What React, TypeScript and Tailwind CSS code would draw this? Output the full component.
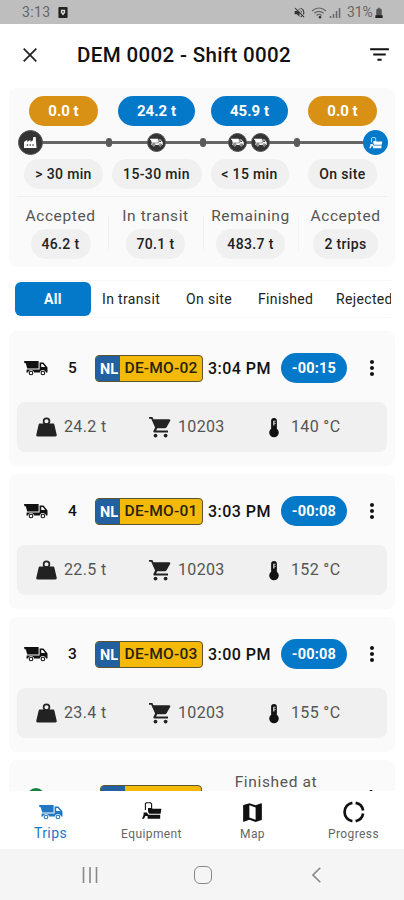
import type { ReactNode } from "react";
import { MdFilterList, MdMap, MdMoreVert, MdVolumeOff } from "react-icons/md";

function TruckIcon({ className = "" }: { className?: string }) {
  return (
    <svg viewBox="0 0 24 16" className={className} fill="currentColor">
      <path d="M0 1h14.6v7.6H3.2L1.8 3.2H.5z" />
      <path
        d="M15.6 2.4h3.8l3.4 4 .7 1v5.2h-1.4a3.2 3.2 0 0 0-6.3 0h-5.6a3.2 3.2 0 0 0-6.3 0H2.4l.3-3h12.9zM17.2 3.9v3h4l-2.4-3z"
        fillRule="evenodd"
      />
      <circle cx="7" cy="13" r="1.8" fill="none" stroke="currentColor" strokeWidth="1.1" />
      <circle cx="18.9" cy="13" r="1.8" fill="none" stroke="currentColor" strokeWidth="1.1" />
    </svg>
  );
}

function PaverIcon({ className = "" }: { className?: string }) {
  return (
    <svg viewBox="0 0 20 18" className={className} fill="currentColor">
      <path d="M3.4 8V1.6L4.4.8h4l1.2 1V7" fill="none" stroke="currentColor" strokeWidth="1.1" />
      <path d="M6 6h3.6l1 .8h8.8l-.8 4.9H7.2L6 9.6z" />
      <path d="M1.6 10.4h3.2l1.6 2.4h11.8v3.9H5.6V14H3.4L2 16.7H0l1.6-4z" />
    </svg>
  );
}

function FactoryIcon() {
  return (
    <svg viewBox="0 0 16 14" className="h-[13px] w-[15px]" fill="currentColor">
      <path d="M1 13V6.5L4.5 4v2.5L8 4v2.5l2.6-1.8L11 1h2.6l.9 12z" />
      <path d="M4 9h1.5v1.6H4zM7 9h1.5v1.6H7zM10 9h1.5v1.6H10z" fill="#444" />
    </svg>
  );
}

function WeightIcon() {
  return (
    <svg viewBox="0 0 21 20" className="mr-[7px] h-[20px] w-[21px]" fill="#222">
      <path d="M4 6.6h13c.8 0 1.2.4 1.4 1.1l2.3 10c.2 1-.3 1.7-1.3 1.7H1.6c-1 0-1.5-.7-1.3-1.7l2.3-10C2.8 7 3.2 6.6 4 6.6z" />
      <circle cx="10.5" cy="4.3" r="2.9" fill="none" stroke="#222" strokeWidth="1.7" />
    </svg>
  );
}

function CartIcon() {
  return (
    <svg viewBox="0 0 22 22" className="ml-px mr-[7px] h-[22px] w-[22px]" fill="#222">
      <path d="M0 1h3.4l1 2.300h15.8c1 0 1.4.8 1 1.5l-3.6 6.5c-.4.7-1 1-1.800 1H8.3l-1.2 2.2H19v2H5.800c-1.300 0-1.800-1-1.200-2.100l1.500-2.800L2.200 2.700H0z" />
      <circle cx="6.5" cy="19.6" r="1.9" />
      <circle cx="16.6" cy="19.6" r="1.9" />
    </svg>
  );
}

function ThermometerIcon() {
  return (
    <svg viewBox="0 0 12 22" className="mr-[11px] h-[21px] w-[12px]" fill="#111">
      <path d="M3 4a3 3 0 0 1 6 0v8.2a5 5 0 1 1-6 0z" />
      <path d="M5.8 4v5" stroke="#ddd" strokeWidth="1.3" />
      <path d="M6 4.5h2M6 6.8h2" stroke="#ddd" strokeWidth=".7" />
    </svg>
  );
}

function StatusBar() {
  return (
    <div className="flex h-6 shrink-0 items-center bg-[#bebebe] pl-[22px] pr-[21px] pt-px text-[14px] text-[#666]">
      <span className="w-[36px] tracking-[0.4px]">3:13</span>
      <svg viewBox="0 0 10 12" className="h-[11px] w-[10px]">
        <rect width="10" height="12" rx="1" fill="#222" />
        <path d="M2.7 3h4.6v3.2L5 9.3 2.7 6.2z" fill="#ddd" />
        <circle cx="5" cy="5.3" r="1" fill="#333" />
      </svg>
      <span className="grow" />
      <MdVolumeOff className="mr-[5px] size-[13px] text-[#333]" />
      <svg viewBox="0 0 16 12" className="mr-[2px] h-[12px] w-[16px]" fill="none" stroke="#666" strokeWidth="1.2">
        <path d="M1 4q7-6 14 0M3.3 6.3q4.7-4 9.4 0M5.4 8.4q2.6-2 5.2 0" />
        <circle cx="9" cy="10.2" r="1.3" fill="#333" stroke="none" />
      </svg>
      <svg viewBox="0 0 12 11" className="mr-[6px] h-[11px] w-[12px]" stroke="#666" strokeWidth="1.5">
        <path d="M1.5 11V9M4.5 11V7M7.5 11V4M10.500 11V1" />
      </svg>
      <span className="w-[28px] tracking-[-0.1px]">31%</span>
      <svg viewBox="0 0 8 12" className="h-[11px] w-[8px]">
        <path d="M2 2h1V.8h2V2h1l1 1v9H1V3z" fill="#555" />
        <path d="M0 9h8v3H0z" fill="#222" />
      </svg>
    </div>
  );
}

function Header() {
  return (
    <header className="flex h-16 shrink-0 items-center bg-white pb-[2px] pl-[23px] pr-[12px]">
      <svg viewBox="0 0 14 14" className="size-[14px]" stroke="#222" strokeWidth="1.7">
        <path d="M.7.7l12.6 12.6M13.3.7L.7 13.3" />
      </svg>
      <h1 className="ml-[40px] grow whitespace-nowrap text-[20.5px] font-medium tracking-[0.36px] text-[#111]">DEM 0002 - Shift 0002</h1>
      <MdFilterList className="mb-[2px] size-[25px] text-[#111]" />
    </header>
  );
}

const stages = [
  { amount: "0.0 t", label: "> 30 min", top: "w-[69px] bg-[#d99115]", bottom: "w-[79px]" },
  { amount: "24.2 t", label: "15-30 min", top: "w-[77px] bg-[#0579c9]", bottom: "w-[90px]" },
  { amount: "45.9 t", label: "< 15 min", top: "w-[77px] bg-[#0579c9]", bottom: "w-[78px]" },
  { amount: "0.0 t", label: "On site", top: "w-[69px] bg-[#d99115]", bottom: "w-[69px]" },
];

const totals = [
  { label: "Accepted", value: "46.2 t", width: "w-[60px]" },
  { label: "In transit", value: "70.1 t", width: "w-[59px]" },
  { label: "Remaining", value: "483.7 t", width: "w-[69px]" },
  { label: "Accepted", value: "2 trips", width: "w-[65px]" },
];

function TruckDot({ className = "" }: { className?: string }) {
  return (
    <span className={`flex size-[19px] items-center justify-center rounded-full border border-[#555] bg-[#333] text-white ${className}`}>
      <TruckIcon className="h-[9px] w-[13px]" />
    </span>
  );
}

function Dot({ className = "" }: { className?: string }) {
  return <span className={`h-[9px] w-[6px] rounded-full bg-[#5a5a5a] ${className}`} />;
}

function Timeline() {
  return (
    <div className="relative -mr-px ml-px flex h-[33px] items-center">
      <span className="absolute inset-x-3 top-[15px] h-[3px] bg-[#666]" />
      <div className="relative flex w-full items-center">
        <span className="flex size-[25px] items-center justify-center rounded-full border border-[#555] bg-[#333] text-white">
          <FactoryIcon />
        </span>
        <Dot className="ml-[63px]" />
        <TruckDot className="ml-[35px]" />
        <Dot className="ml-[34px]" />
        <TruckDot className="ml-[22px]" />
        <TruckDot className="ml-[4px]" />
        <Dot className="ml-[24px]" />
        <span className="ml-auto flex size-[25px] items-center justify-center rounded-full bg-[#0579c9] text-white">
          <PaverIcon className="h-[12px] w-[14px]" />
        </span>
      </div>
    </div>
  );
}

function Summary() {
  return (
    <section className="mx-[9px] h-[179px] shrink-0 rounded-lg bg-[#fafafa] px-2 pt-2">
      <div className="grid grid-cols-[93px_93px_93px_93px]">
        {stages.map((s, i) => (
          <div key={i} className="flex justify-center">
            <span className={`flex h-[30px] items-center justify-center rounded-full pt-px text-[15px] font-bold text-white ${s.top}`}>{s.amount}</span>
          </div>
        ))}
      </div>
      <Timeline />
      <div className="grid grid-cols-[93px_93px_93px_93px]">
        {stages.map((s, i) => (
          <div key={i} className="flex justify-center">
            <span className={`flex h-[30px] items-center justify-center whitespace-nowrap rounded-full bg-[#f0f0f0] text-[14px] font-medium tracking-[0.35px] text-[#222] ${s.bottom}`}>{s.label}</span>
          </div>
        ))}
      </div>
      <div className="mt-[7px] h-px bg-[#efefef]" />
      <div className="-ml-[4px] grid grid-cols-[95px_95px_95px_95px] pt-[9px]">
        {totals.map((t, i) => (
          <div key={i} className={`flex flex-col items-center ${i ? "bg-[linear-gradient(#f2f2f2,#f2f2f2)] bg-[length:1px_34px] bg-[position:0_10px] bg-no-repeat" : ""}`}>
            <span className="h-[23px] whitespace-nowrap text-[15.5px] leading-[20px] tracking-[0.6px] text-[#555]">{t.label}</span>
            <span className={`flex h-[30px] items-center justify-center whitespace-nowrap rounded-full bg-[#f0f0f0] text-[14px] font-medium tracking-[0.35px] text-[#222] ${t.width}`}>{t.value}</span>
          </div>
        ))}
      </div>
    </section>
  );
}

function Filters() {
  return (
    <nav className="ml-[15px] mr-[13px] mt-[13px] flex h-[38px] shrink-0 items-center overflow-hidden whitespace-nowrap border-y border-[#f7f7f7] text-[14px] tracking-[0.35px] text-[#222]">
      <span className="flex h-[34px] w-[76px] shrink-0 items-center justify-center rounded-md bg-[#0579c9] font-bold text-white">All</span>
      <span className="ml-[11px] w-[84px] shrink-0">In transit</span>
      <span className="w-[72px] shrink-0">On site</span>
      <span className="w-[78px] shrink-0">Finished</span>
      <span className="shrink-0">Rejected</span>
    </nav>
  );
}

function Plate({ text, width = "w-[108px]" }: { text: string; width?: string }) {
  return (
    <span className={`flex h-[27px] shrink-0 overflow-hidden rounded-[4px] border border-[#5c5530] bg-[#f5b90a] ${width}`}>
      <span className="flex w-[24px] shrink-0 items-end justify-center bg-[#22609f] pb-px pl-[2px] text-[14.5px] font-bold leading-[20px] text-white">NL</span>
      <span className="flex grow items-center justify-center whitespace-nowrap pt-px text-[15.5px] font-medium tracking-[0.2px] text-[#28230f]">{text}</span>
    </span>
  );
}

function Measure({ icon, text, className = "" }: { icon: ReactNode; text: string; className?: string }) {
  return (
    <span className={`flex items-center whitespace-nowrap ${className}`}>
      {icon}
      <span>{text}</span>
    </span>
  );
}

const trips = [
  { n: 5, plate: "DE-MO-02", time: "3:04 PM", delta: "-00:15", weight: "24.2 t", order: "10203", temp: "140 °C" },
  { n: 4, plate: "DE-MO-01", time: "3:03 PM", delta: "-00:08", weight: "22.5 t", order: "10203", temp: "152 °C" },
  { n: 3, plate: "DE-MO-03", time: "3:00 PM", delta: "-00:08", weight: "23.4 t", order: "10203", temp: "155 °C" },
];

function TripCard({ trip }: { trip: (typeof trips)[number] }) {
  return (
    <article className="h-[135px] shrink-0 rounded-lg bg-[#fafafa] px-2">
      <div className="flex h-[71px] items-center pl-[7px] pt-[3px] text-[#111]">
        <TruckIcon className="h-[16px] w-[24px] shrink-0" />
        <span className="ml-[20px] w-[27px] pt-[2px] text-[15.5px] font-medium">{trip.n}</span>
        <Plate text={trip.plate} />
        <span className="ml-[5px] w-[73px] whitespace-nowrap pt-px text-[16px] font-medium tracking-[0.45px]">{trip.time}</span>
        <span className="flex h-[30px] w-[66px] items-center justify-center rounded-full bg-[#0579c9] pt-px text-[14.5px] font-bold tracking-[0.2px] text-white">{trip.delta}</span>
        <MdMoreVert className="ml-[13px] size-6" />
      </div>
      <div className="flex h-[50px] items-center rounded-lg bg-[#f0f0f0] pl-[19px] text-[16px] tracking-[0.35px] text-[#555]">
        <Measure className="w-[112px]" text={trip.weight} icon={<WeightIcon />} />
        <Measure className="w-[120px]" text={trip.order} icon={<CartIcon />} />
        <Measure text={trip.temp} icon={<ThermometerIcon />} />
      </div>
    </article>
  );
}

function TripList() {
  return (
    <main className="mx-[9px] mt-[13px] flex min-h-0 grow flex-col gap-2 overflow-hidden">
      {trips.map((t) => <TripCard key={t.n} trip={t} />)}
      <article className="flex h-[135px] shrink-0 items-start rounded-lg bg-[#fafafa] pl-[18px]">
        <span className="mt-[28px] size-[18px] rounded-full bg-[#16803c]" />
        <span className="ml-[55px] mt-[25px]"><Plate text="" width="w-[102px]" /></span>
        <span className="ml-[28px] mt-[13px] w-[92px] text-center text-[15.5px] leading-[19px] tracking-[0.65px] text-[#555]">Finished at</span>
        <MdMoreVert className="ml-[37px] mt-[26px] size-6" />
      </article>
    </main>
  );
}

function ProgressIcon() {
  return (
    <svg viewBox="0 0 22 22" className="size-[22px]" fill="none" stroke="#111" strokeWidth="2.7">
      <path d="M12.6 1.9a9.2 9.2 0 0 1 7.5 7.5M20.1 12.6a9.2 9.2 0 0 1-7.5 7.5M9.4 20.1a9.2 9.2 0 0 1 0-18.2" />
    </svg>
  );
}

function BottomNav() {
  return (
    <nav className="grid h-[58px] shrink-0 grid-cols-4 bg-white text-[12px] tracking-[0.4px] text-[#666]">
      <span className="flex flex-col items-center text-[14px] text-[#2278c4]">
        <span className="flex h-[34px] items-center pt-[7px]"><TruckIcon className="h-[16px] w-[24px]" /></span>
        <span className="leading-[17px]">Trips</span>
      </span>
      <span className="flex flex-col items-center">
        <span className="flex h-[34px] items-center pt-[6px] text-[#111]"><PaverIcon className="h-[18px] w-[20px]" /></span>
        <span className="leading-[19px]">Equipment</span>
      </span>
      <span className="flex flex-col items-center">
        <span className="flex h-[34px] items-center pt-[8px] text-[#111]"><MdMap className="size-[25px]" /></span>
        <span className="leading-[19px]">Map</span>
      </span>
      <span className="flex flex-col items-center">
        <span className="flex h-[34px] items-center pt-[8px]"><ProgressIcon /></span>
        <span className="leading-[19px]">Progress</span>
      </span>
    </nav>
  );
}

function SystemNav() {
  return (
    <div className="flex h-[51px] shrink-0 items-center bg-[#f5f5f5] pl-[82px] pt-px text-[#888]">
      <svg viewBox="0 0 16 16" className="h-[16px] w-[16px]" stroke="currentColor" strokeWidth="1.6">
        <path d="M1.5 0v16M8 0v16M14.5 0v16" />
      </svg>
      <span className="ml-[96px] size-[18px] rounded-[6px] border-[1.5px] border-[#888]" />
      <svg viewBox="0 0 9 16" className="ml-[100px] h-[16px] w-[9px]" fill="none" stroke="currentColor" strokeWidth="1.6">
        <path d="M8.3 .8 1 8l7.3 7.2" />
      </svg>
    </div>
  );
}

export default function App() {
  return (
    <div className="flex h-[900px] w-[404px] flex-col overflow-hidden bg-white font-['Roboto',sans-serif]">
      <StatusBar />
      <Header />
      <Summary />
      <Filters />
      <TripList />
      <BottomNav />
      <SystemNav />
    </div>
  );
}
